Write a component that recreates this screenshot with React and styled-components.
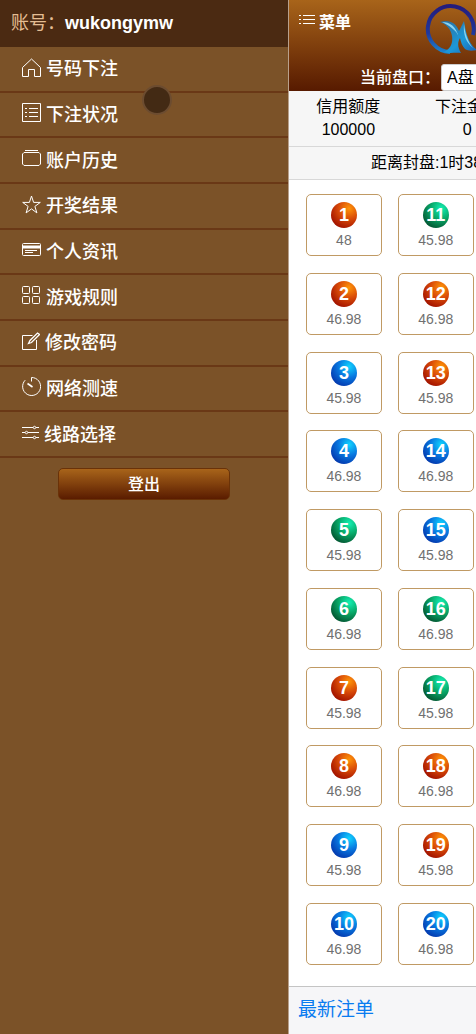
import React, { useState } from 'react';
import styled, { createGlobalStyle } from 'styled-components';

const menuItems = [
  { icon: 'home', width: 19, label: '号码下注' },
  { icon: 'list', width: 19, label: '下注状况' },
  { icon: 'albums', width: 19, label: '账户历史' },
  { icon: 'star', width: 19, label: '开奖结果' },
  { icon: 'card', width: 19, label: '个人资讯' },
  { icon: 'grid', width: 19, label: '游戏规则' },
  { icon: 'compose', width: 18, label: '修改密码' },
  { icon: 'timer', width: 19, label: '网络测速' },
  { icon: 'sliders', width: 17, label: '线路选择' }
];

const balls = [
  { no: 1, color: 'red', odds: '48' },
  { no: 2, color: 'red', odds: '46.98' },
  { no: 3, color: 'blue', odds: '45.98' },
  { no: 4, color: 'blue', odds: '46.98' },
  { no: 5, color: 'green', odds: '45.98' },
  { no: 6, color: 'green', odds: '46.98' },
  { no: 7, color: 'red', odds: '45.98' },
  { no: 8, color: 'red', odds: '46.98' },
  { no: 9, color: 'blue', odds: '45.98' },
  { no: 10, color: 'blue', odds: '46.98' },
  { no: 11, color: 'green', odds: '45.98' },
  { no: 12, color: 'red', odds: '46.98' },
  { no: 13, color: 'red', odds: '45.98' },
  { no: 14, color: 'blue', odds: '46.98' },
  { no: 15, color: 'blue', odds: '45.98' },
  { no: 16, color: 'green', odds: '46.98' },
  { no: 17, color: 'green', odds: '45.98' },
  { no: 18, color: 'red', odds: '46.98' },
  { no: 19, color: 'red', odds: '45.98' },
  { no: 20, color: 'blue', odds: '46.98' }
];

const ballColors = {
  red: '#ff9408 0%, #d84a08 40%, #a81800 75%, #841000 100%',
  green: '#14f0b4 0%, #08a868 40%, #046038 75%, #044428 100%',
  blue: '#10d4ff 0%, #0878e0 40%, #0440b4 75%, #042c8c 100%'
};

const icons = {
  home: <path d="M.5 9.5 9.5 1l9 8.5v9h-6v-7h-6v7h-6z" />,
  list: (
    <>
      <path d="M.5.5h18v18H.5zM7 5.5h9M7 9.5h9M7 13.5h9" />
      <path d="M3 5.5h2M3 9.5h2M3 13.5h2" />
    </>
  ),
  albums: <path d="M3 1.5h13M2 3.5h15l1.5 1.5v10L17 16.5H2L.5 15V5z" />,
  star: <path d="m9.5 1 2.1 6.4h6.7l-5.4 4 2 6.5-5.4-4-5.4 4 2-6.5-5.4-4h6.7z" />,
  card: (
    <>
      <rect x=".5" y="3.5" width="18" height="12" rx="1" />
      <path d="M1 7h17" strokeWidth="3" />
      <path d="M3 10.5h12M3 12.5h8" />
    </>
  ),
  grid: (
    <>
      <rect x=".5" y=".5" width="7" height="7" rx="1" />
      <rect x="10.5" y=".5" width="7" height="7" rx="1" />
      <rect x=".5" y="10.5" width="7" height="7" rx="1" />
      <rect x="10.5" y="10.5" width="7" height="7" rx="1" />
    </>
  ),
  compose: (
    <>
      <path d="M10.5 3.5H.5v14h14V8" />
      <path d="m6.5 11.5 1.5-3L15.5 1l2 1.5-8 8z" strokeWidth="1.3" />
    </>
  ),
  timer: (
    <>
      <path d="M3.2 3.2a9 9 0 1 0 6.3-2.7v4" />
      <path d="m5.5 6.5 5 3.5" strokeWidth="1.6" />
    </>
  ),
  sliders: (
    <>
      <path d="M0 4.5h11M14 4.5h3M0 9.5h3M6 9.5h11M0 14.5h11M14 14.5h3" />
      <circle cx="12.5" cy="4.5" r="1.2" />
      <circle cx="4.5" cy="9.5" r="1.2" />
      <circle cx="12.5" cy="14.5" r="1.2" />
    </>
  ),
  bars: (
    <>
      <path d="M4 4.5h12M4 8.5h12M4 12.5h12" />
      <path d="M0 4.5h2M0 8.5h2M0 12.5h2" />
    </>
  )
};

function Icon({ name, width = 19 }) {
  return (
    <StIcon width={width} height="19" viewBox={`0 0 ${width} 19`} aria-hidden="true">
      {icons[name]}
    </StIcon>
  );
}

function Logo() {
  return (
    <StLogo viewBox="0 0 52 52" aria-hidden="true">
      <defs>
        <linearGradient id="ring" x1="0" y1="0" x2="0" y2="1">
          <stop offset="0" stopColor="#241c7c" />
          <stop offset=".6" stopColor="#20389c" />
          <stop offset="1" stopColor="#1c84cc" />
        </linearGradient>
        <linearGradient id="wing" x1="0" y1="0" x2="1" y2="1">
          <stop offset="0" stopColor="#2c6c9c" />
          <stop offset=".6" stopColor="#1c98d8" />
          <stop offset="1" stopColor="#1c60b0" />
        </linearGradient>
      </defs>
      <path
        d="M25 49A23 23 0 1 1 48 32"
        fill="none"
        stroke="url(#ring)"
        strokeWidth="4"
      />
      <path
        d="M15 19c8-3 16 0 19 9l5-10c2 11 3 21 13 29-5 1-9 1-12-1-3-3-4-7-5-11-3 5-2 10 1 15-6-1-11 1-17-1 7-4 9-9 8-16-1-7-6-12-12-14z"
        fill="url(#wing)"
      />
      <path
        d="M17 19c8 0 14 4 17 16-1-5-5-10-17-16zM39 21c1 10 4 18 9 24-7-6-10-13-9-24z"
        fill="#8cd4f0"
      />
    </StLogo>
  );
}

function App() {
  const [plate, setPlate] = useState('A');

  return (
    <Container>
      <GlobalStyle />
      <SidePanel>
        <Account>
          账号：<UserName>wukongymw</UserName>
        </Account>
        <MenuList>
          {menuItems.map((item) => (
            <MenuItem key={item.icon}>
              <MenuLink href="#">
                <Icon name={item.icon} width={item.width} />
                {item.label}
              </MenuLink>
            </MenuItem>
          ))}
        </MenuList>
        <LogoutButton type="button">登出</LogoutButton>
        <TouchDot />
      </SidePanel>

      <Page>
        <Header>
          <HeaderTop>
            <MenuButton type="button">
              <Icon name="bars" width={16} />
              菜单
            </MenuButton>
            <Logo />
          </HeaderTop>
          <PlateRow>
            <label htmlFor="plate">当前盘口：</label>
            <PlateSelect
              id="plate"
              value={plate}
              onChange={(event) => setPlate(event.target.value)}
            >
              <option value="A">A盘</option>
            </PlateSelect>
          </PlateRow>
        </Header>
        <Summary>
          <SummaryItem>
            <dt>信用额度</dt>
            <dd>100000</dd>
          </SummaryItem>
          <SummaryItem>
            <dt>下注金额</dt>
            <dd>0</dd>
          </SummaryItem>
        </Summary>
        <Countdown>距离封盘:1时38分</Countdown>
        <BallGrid>
          {balls.map((ball) => (
            <BallCard key={ball.no} type="button">
              <Ball $color={ball.color}>{ball.no}</Ball>
              <Odds>{ball.odds}</Odds>
            </BallCard>
          ))}
        </BallGrid>
        <Footer>
          <FooterLink href="#">最新注单</FooterLink>
        </Footer>
      </Page>
    </Container>
  );
}

export default App;

const GlobalStyle = createGlobalStyle`
  * {
    box-sizing: border-box;
  }
  body {
    margin: 0;
    font-family: 'Liberation Sans', 'Noto Sans CJK SC', sans-serif;
    font-size: 16px;
  }
  button, select {
    font: inherit;
  }
  a {
    text-decoration: none;
  }
`;

const Container = styled.div`
  display: flex;
  min-height: 100vh;
  overflow: hidden;
`;

const StIcon = styled.svg`
  flex: none;
  fill: none;
  stroke: currentColor;
  stroke-width: 1;
`;

//왼쪽 메뉴
const SidePanel = styled.nav`
  position: relative;
  flex: 0 0 288px;
  display: flex;
  flex-direction: column;
  background-color: #7b5228;
`;
const Account = styled.div`
  height: 47px;
  padding: 0 11px;
  font-size: 18px;
  line-height: 47px;
  color: #e4bd93;
  background-color: #4b2a12;
`;
const UserName = styled.strong`
  color: #fff;
`;
const MenuList = styled.ul`
  display: grid;
  grid-auto-rows: 1fr;
  height: 411px;
  margin: 0;
  padding: 0;
  list-style: none;
`;
const MenuItem = styled.li`
  display: flex;
  border-bottom: 2px solid #6a3816;
`;
const MenuLink = styled.a`
  flex: 1;
  display: flex;
  align-items: center;
  gap: 5px;
  padding: 0 22px 3px;
  font-size: 18px;
  font-weight: 500;
  color: #fff;
`;
const LogoutButton = styled.button`
  align-self: center;
  width: 60%;
  height: 32px;
  margin-top: 10px;
  padding: 0 0 3px;
  border: 1px solid #6a3208;
  border-radius: 5px;
  font-weight: 500;
  color: #fff;
  background: linear-gradient(#a8641a, #5a1c00);
`;
//터치 위치 표시
const TouchDot = styled.span`
  position: absolute;
  top: 85px;
  left: 142px;
  width: 30px;
  height: 30px;
  border: 2px solid #6c4c30;
  border-radius: 50%;
  background-color: #432a14;
`;

//오른쪽 페이지
const Page = styled.main`
  flex: 0 0 100%;
  display: flex;
  flex-direction: column;
  border-left: 1px solid #b8a08c;
  background-color: #fff;
`;
const Header = styled.header`
  height: 91px;
  color: #fff;
  background: linear-gradient(#a8641a, #571a00);
`;
const HeaderTop = styled.div`
  display: flex;
  align-items: flex-start;
  gap: 74px;
  height: 63px;
  padding: 3px 10px;
`;
const MenuButton = styled.button`
  display: flex;
  align-items: center;
  gap: 4px;
  height: 35px;
  padding: 0;
  border: 0;
  font-weight: 700;
  color: #fff;
  background: none;
`;
const StLogo = styled.svg`
  width: 52px;
  height: 52px;
`;
const PlateRow = styled.div`
  display: flex;
  align-items: center;
  gap: 1px;
  height: 28px;
  padding-left: 71px;
  font-weight: 500;

  & > label {
    padding-bottom: 3px;
  }
`;
const PlateSelect = styled.select`
  appearance: none;
  width: 60px;
  height: 27px;
  padding: 0 5px;
  border: 1px solid #ccc;
  border-radius: 3px;
  font-weight: 400;
  color: #000;
  background-color: #fff;
`;
const Summary = styled.dl`
  display: grid;
  grid-template-columns: repeat(4, 1fr);
  height: 56px;
  margin: 0;
  padding-top: 4px;
  border-bottom: 1px solid #d8d8d8;
  background-color: #f6f6f6;
`;
const SummaryItem = styled.div`
  text-align: center;
  line-height: 23px;
  white-space: nowrap;

  & dd {
    margin: 0;
  }
`;
const Countdown = styled.div`
  height: 33px;
  padding-left: 82px;
  border-bottom: 1px solid #d8d8d8;
  line-height: 31px;
  white-space: nowrap;
  background-color: #f6f6f6;
`;
const BallGrid = styled.div`
  flex: 1;
  display: grid;
  grid-template-columns: repeat(5, 1fr);
  grid-template-rows: repeat(10, 1fr);
  grid-auto-flow: column;
  align-items: center;
  padding: 6px 7px 13px 9px;
`;
const BallCard = styled.button`
  display: flex;
  flex-direction: column;
  align-items: center;
  height: 62px;
  margin: 0 8px;
  padding: 7px 0 0;
  border: 1px solid #c09a64;
  border-radius: 5px;
  background-color: #fff;
`;
const Ball = styled.span`
  width: 26px;
  height: 26px;
  border-radius: 50%;
  font-size: 18px;
  font-weight: 700;
  line-height: 26px;
  text-align: center;
  color: #fff;
  background: radial-gradient(
    circle at 70% 25%,
    ${({ $color }) => ballColors[$color]}
  );
`;
const Odds = styled.span`
  font-size: 14px;
  line-height: 24px;
  color: #707070;
`;
const Footer = styled.footer`
  height: 48px;
  padding: 0 9px;
  border-top: 1px solid #c4c4c4;
  line-height: 45px;
  background-color: #f6f6f8;
`;
const FooterLink = styled.a`
  font-size: 19px;
  color: #0a7cf0;
`;
